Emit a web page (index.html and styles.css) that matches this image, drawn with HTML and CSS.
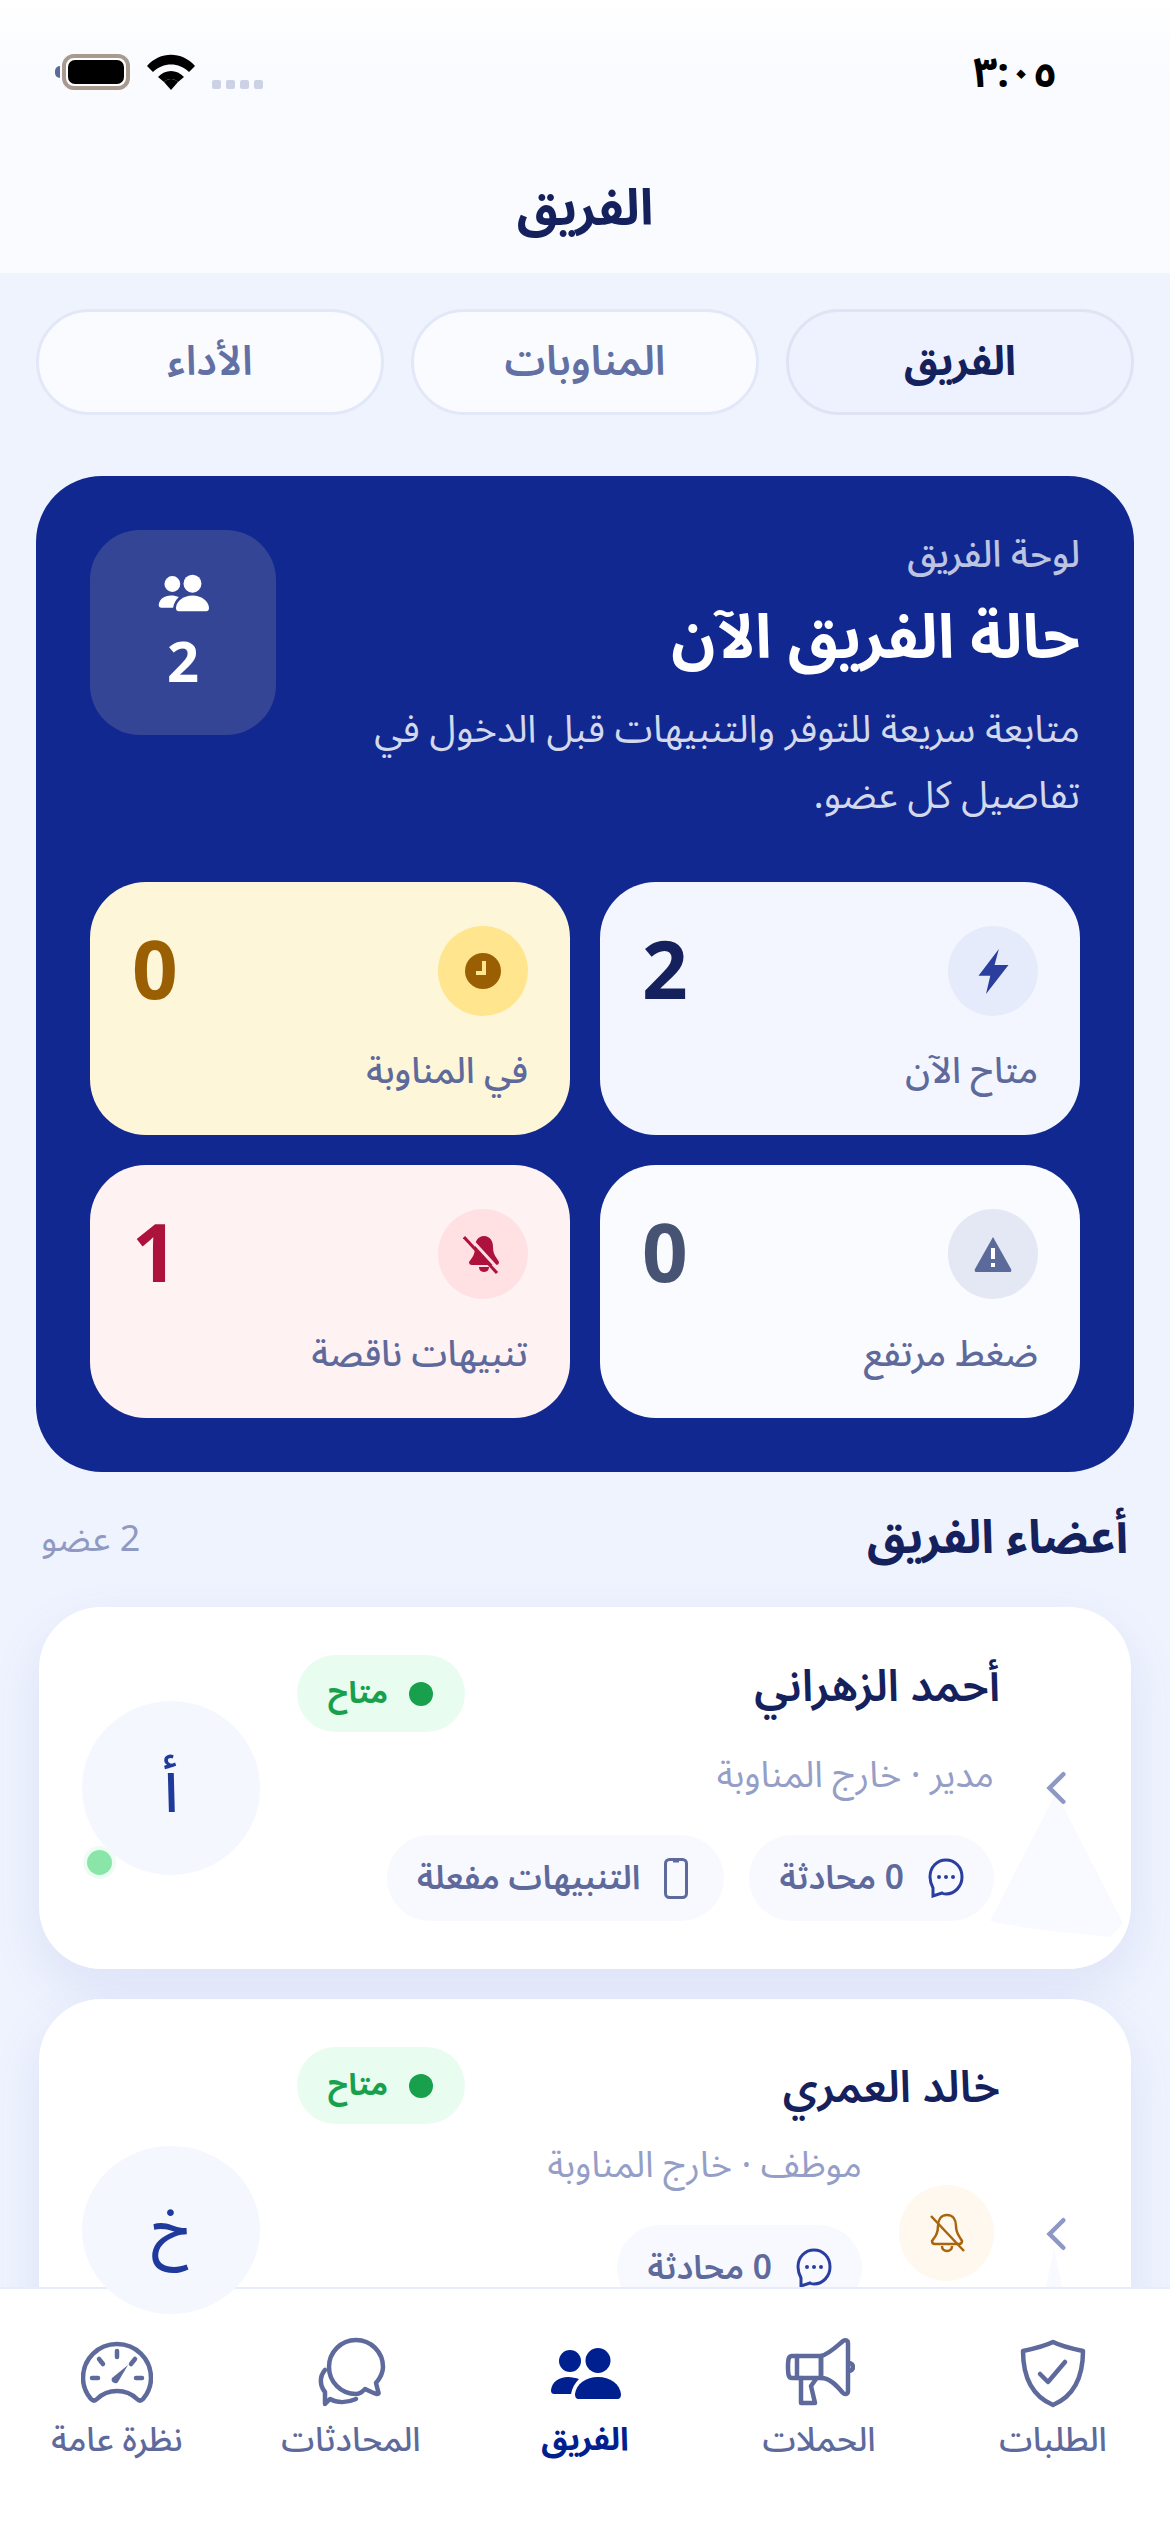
FILE: index.html
```html
<!DOCTYPE html>
<html lang="ar" dir="rtl">
<head>
  <meta charset="UTF-8">
  <meta name="viewport" content="width=device-width, initial-scale=1.0">
  <title>الفريق</title>
  <link rel="stylesheet" href="styles.css">
</head>
<body>
  <svg class="defs" width="0" height="0" aria-hidden="true">
    <symbol id="people" viewBox="0 0 71 51">
      <circle cx="20" cy="13" r="11"/>
      <circle cx="48" cy="12.5" r="12.5"/>
      <path d="M1 42C2 34 9 29 18 29C22 29 26 30 29 31C25 35 22 40 21 46H5C2 46 1 45 1 42Z"/>
      <path d="M25 46C26 36 36 29 48 29C60 29 70 36 71 46C71 49 70 51 67 51H29C26 51 25 49 25 46Z"/>
    </symbol>
  </svg>

  <!-- الراس -->
  <header class="top">
    <div class="status">
      <span class="time">٣:٠٥</span>
      <div class="status-icons">
        <span class="nub"></span>
        <span class="battery"><span class="battery-fill"></span></span>
        <svg class="wifi" viewBox="0 0 48 36"><path d="M0 12C13 -3 35 -3 48 12L42 18C32 8 16 8 6 18Z"/><path d="M11 23C18 15 30 15 37 23L31 28C27 24 21 24 17 28Z"/><path d="M17 28C21 24 27 24 31 28L24 36Z"/></svg>
        <span class="signal"><i></i><i></i><i></i><i></i></span>
      </div>
    </div>
    <h1>الفريق</h1>
  </header>

  <nav class="tabs">
    <a class="tab active">الفريق</a>
    <a class="tab">المناوبات</a>
    <a class="tab">الأداء</a>
  </nav>

  <!-- لوحة الحالة -->
  <section class="hero">
    <div class="hero-head">
      <div class="hero-copy">
        <div class="hero-label">لوحة الفريق</div>
        <h2>حالة الفريق الآن</h2>
        <p>متابعة سريعة للتوفر والتنبيهات قبل الدخول في تفاصيل كل عضو.</p>
      </div>
      <div class="hero-count">
        <svg class="hero-people"><use href="#people"/></svg>
        <strong>2</strong>
      </div>
    </div>
    <div class="stats">
      <div class="stat stat-blue">
        <div class="stat-top">
          <span class="stat-icon"><svg class="bolt" viewBox="2 0 28 42"><path d="M21 0L2 25H13L9 42L30 15H17Z"/></svg></span>
          <span class="stat-num">2</span>
        </div>
        <div class="stat-label">متاح الآن</div>
      </div>
      <div class="stat stat-amber">
        <div class="stat-top">
          <span class="stat-icon"><svg viewBox="0 0 40 40"><circle cx="20" cy="20" r="18"/><path class="hand" d="M21 10V22H13"/></svg></span>
          <span class="stat-num">0</span>
        </div>
        <div class="stat-label">في المناوبة</div>
      </div>
      <div class="stat stat-slate">
        <div class="stat-top">
          <span class="stat-icon"><svg viewBox="0 0 40 36"><path d="M20 1L38 33C39 35 38 36 36 36H4C2 36 1 35 2 33Z"/><path class="hand" d="M20 12V23M20 27V31"/></svg></span>
          <span class="stat-num">0</span>
        </div>
        <div class="stat-label">ضغط مرتفع</div>
      </div>
      <div class="stat stat-red">
        <div class="stat-top">
          <span class="stat-icon"><svg viewBox="0 0 40 40"><path d="M21 2C27 2 30 7 30 13C30 21 34 24 36 28C36 30 35 31 33 31H9C7 31 6 30 6 28C9 24 12 21 12 13C12 7 15 2 21 2Z"/><path d="M16 33H26C26 36 24 38 21 38C18 38 16 36 16 33Z"/><path class="gap" d="M5 2L38 38"/><path class="slash" d="M1 3L34 39"/></svg></span>
          <span class="stat-num">1</span>
        </div>
        <div class="stat-label">تنبيهات ناقصة</div>
      </div>
    </div>
  </section>

  <div class="section-head">
    <h3>أعضاء الفريق</h3>
    <span>2 عضو</span>
  </div>

  <!-- الاعضاء -->
  <article class="member">
    <svg class="chevron" viewBox="0 0 24 36"><path d="M20 3L5 18L20 33"/></svg>
    <div class="member-main">
      <div class="member-head">
        <div class="name">أحمد الزهراني</div>
        <span class="pill"><i></i>متاح</span>
      </div>
      <div class="sub">مدير · خارج المناوبة</div>
      <div class="chips">
        <span class="chip">
          <svg class="chat" viewBox="0 0 36 40"><path d="M18 2C9 2 2 9 2 19C2 24 4 28 5 30V38L14 35C15 36 17 36 18 36C27 36 34 28 34 19C34 9 27 2 18 2Z"/><circle class="dot" cx="11" cy="19" r="2"/><circle class="dot" cx="18" cy="19" r="2"/><circle class="dot" cx="25" cy="19" r="2"/></svg>
          0 محادثة
        </span>
        <span class="chip">
          <svg class="phone" viewBox="0 0 24 41"><rect x="1.5" y="1.5" width="21" height="38" rx="4"/><path d="M9 3H15"/></svg>
          التنبيهات مفعلة
        </span>
      </div>
    </div>
    <div class="avatar">أ<span class="online"></span></div>
    <svg class="mark" viewBox="0 0 133 144"><path d="M66 0L133 130L120 144C80 140 30 135 0 128Z"/></svg>
  </article>

  <article class="member member-tall">
    <svg class="chevron" viewBox="0 0 24 36"><path d="M20 3L5 18L20 33"/></svg>
    <div class="member-main">
      <div class="member-head">
        <div class="name">خالد العمري</div>
        <span class="pill"><i></i>متاح</span>
      </div>
      <div class="member-lower">
        <span class="mute"><svg viewBox="0 0 40 40"><path d="M20 2C26 2 29 7 29 13C29 21 33 24 35 28C35 30 34 31 32 31H8C6 31 5 30 5 28C8 24 11 21 11 13C11 7 14 2 20 2Z"/><path d="M15 33C15 36 17 38 20 38C23 38 25 36 25 33"/><path d="M4 3L37 38"/></svg></span>
        <div>
          <div class="sub">موظف · خارج المناوبة</div>
          <div class="chips">
            <span class="chip">
              <svg class="chat" viewBox="0 0 36 40"><path d="M18 2C9 2 2 9 2 19C2 24 4 28 5 30V38L14 35C15 36 17 36 18 36C27 36 34 28 34 19C34 9 27 2 18 2Z"/><circle class="dot" cx="11" cy="19" r="2"/><circle class="dot" cx="18" cy="19" r="2"/><circle class="dot" cx="25" cy="19" r="2"/></svg>
              0 محادثة
            </span>
          </div>
        </div>
      </div>
    </div>
    <div class="avatar avatar-over">خ</div>
    <svg class="mark" viewBox="0 0 42 100" preserveAspectRatio="none"><path d="M21 0L42 100H0Z"/></svg>
  </article>

  <!-- الشريط السفلي -->
  <footer class="bottom-nav">
    <a class="nav-item">
      <svg class="nav-icon" viewBox="0 0 72 72"><path d="M36 6C40 8 52 12 66 15C66 42 57 60 36 69C15 60 6 42 6 15C20 12 32 8 36 6Z"/><path d="M23 38L31 46L48 26"/></svg>
      <span>الطلبات</span>
    </a>
    <a class="nav-item">
      <svg class="nav-icon" viewBox="0 0 72 72"><path d="M38 20C46 18 54 10 60 5C63 3 65 5 65 7V55C65 58 62 59 60 57C54 50 47 42 38 42Z"/><path d="M38 20H9C6 20 5 22 5 31C5 40 6 42 9 42H38Z"/><path d="M14 20V42"/><path d="M18 42V67H32L28 50L33 43"/><path d="M66 27A4 4 0 0 1 66 35"/></svg>
      <span>الحملات</span>
    </a>
    <a class="nav-item active">
      <svg class="nav-people"><use href="#people"/></svg>
      <span>الفريق</span>
    </a>
    <a class="nav-item">
      <svg class="nav-icon" viewBox="0 0 72 72"><path d="M41 4A27 27 0 1 0 41 58C45 58 47 56 50 53C54 55 58 57 62 58C64 58 64 57 63 55L61 47C66 41 68 36 68 31A27 27 0 0 0 41 4Z"/><path d="M10 34C4 41 5 50 10 56V68L15 63C22 67 32 67 41 63"/></svg>
      <span>المحادثات</span>
    </a>
    <a class="nav-item">
      <svg class="nav-icon" viewBox="0 0 72 72"><path d="M10 63C4 56 2 48 2 42C2 23 17 8 36 8C55 8 70 23 70 42C70 48 68 56 62 63C60 65 58 65 56 63C51 58 44 55 36 55C28 55 21 58 16 63C14 65 12 65 10 63Z"/><path d="M36 15V21M18 23L22 28M54 23L50 28M11 42H17M55 42H61"/><path class="needle" d="M47 29L37 46C35 49 29 46 31 42Z"/></svg>
      <span>نظرة عامة</span>
    </a>
  </footer>
</body>
</html>
```

FILE: styles.css
```css
* {
  box-sizing: border-box;
}

html, body {
  margin: 0;
  height: 2532px;
  overflow: hidden;
}

body {
  position: relative;
  background-color: #eff3fe;
  color: #14215c;
  font-family: "Noto Sans", "Noto Sans Arabic", "DejaVu Sans", sans-serif;
}

.defs {
  position: absolute;
}

/* Header */
.top {
  height: 273px;
  background: linear-gradient(#fff, #fafbff 70px);
  padding-top: 52px;
}

.status {
  display: flex;
  justify-content: space-between;
  height: 40px;
  padding: 0 113px 0 55px;
}

.time {
  font-size: 42px;
  font-weight: 700;
  line-height: 38px;
  color: #000;
}

.status-icons {
  direction: ltr;
  display: flex;
  align-items: center;
  height: 40px;
}

.nub {
  width: 5px;
  height: 12px;
  border-radius: 5px 0 0 5px;
  background-color: #5b6a9c;
}

.battery {
  width: 68px;
  height: 36px;
  border: 4px solid #a89a8e;
  border-radius: 12px;
  background-color: #fff;
  padding: 2px;
  margin-left: 2px;
}

.battery-fill {
  display: block;
  height: 100%;
  background-color: #000;
  border-radius: 7px;
}

.wifi {
  width: 48px;
  height: 36px;
  margin-left: 17px;
}

.signal {
  display: flex;
  gap: 5px;
  margin-left: 17px;
  align-self: flex-end;
  margin-bottom: 3px;
}

.signal i {
  width: 9px;
  height: 9px;
  border-radius: 2px;
  background-color: #cdd1e5;
}

h1 {
  margin: 82px 0 0;
  text-align: center;
  font-size: 50px;
  font-weight: 700;
  line-height: 64px;
}

/* Tabs */
.tabs {
  display: grid;
  grid-template-columns: repeat(3, 1fr);
  gap: 27px;
  padding: 36px 36px 0;
}

.tab {
  height: 106px;
  display: flex;
  align-items: center;
  justify-content: center;
  border: 3px solid #e3e8f8;
  border-radius: 53px;
  background-color: #fafbff;
  color: #6270a3;
  font-size: 41px;
  font-weight: 600;
}

.tab.active {
  background-color: #eef2fe;
  border-color: #dfe4f4;
  color: #14215c;
  font-weight: 700;
}

/* Hero */
.hero {
  margin: 61px 36px 0;
  padding: 54px;
  height: 996px;
  background-color: #122891;
  border-radius: 66px;
}

.hero-head {
  display: flex;
  justify-content: space-between;
  height: 352px;
}

.hero-label {
  font-size: 37px;
  font-weight: 500;
  line-height: 46px;
  color: #bcc4e0;
}

.hero h2 {
  margin: 21px 0 0;
  font-size: 61px;
  font-weight: 700;
  line-height: 76px;
  color: #fff;
}

.hero p {
  margin: 21px 0 0;
  width: 730px;
  font-size: 38.4px;
  line-height: 66px;
  color: #d3d8ea;
}

.hero-count {
  width: 186px;
  height: 205px;
  border-radius: 50px;
  background-color: #344596;
  display: flex;
  flex-direction: column;
  align-items: center;
  padding-top: 44px;
  color: #fff;
}

.hero-people {
  width: 51px;
  height: 38px;
  fill: #fff;
}

.hero-count strong {
  font-size: 56px;
  line-height: 76px;
  margin-top: 10px;
}

.stats {
  display: grid;
  grid-template-columns: 1fr 1fr;
  gap: 30px;
}

.stat {
  height: 253px;
  border-radius: 56px;
  padding: 44px 42px 0;
}

.stat-top {
  display: flex;
  justify-content: space-between;
  align-items: center;
}

.stat-icon {
  width: 90px;
  height: 90px;
  border-radius: 50%;
  display: flex;
  align-items: center;
  justify-content: center;
}

.stat-icon svg {
  width: 40px;
  height: 40px;
}

.stat-icon .bolt {
  width: 31px;
  height: 45px;
}

.stat-num {
  font-size: 80px;
  font-weight: 700;
  line-height: 84px;
  margin-bottom: 6px;
}

.stat-label {
  margin-top: 30px;
  font-size: 36px;
  font-weight: 500;
  line-height: 48px;
  color: #5e6a9b;
}

.stat-blue { background-color: #f3f6ff; }
.stat-blue .stat-icon { background-color: #e6ebfb; }
.stat-blue svg { fill: #2a3f9d; }
.stat-blue .stat-num { color: #14215c; }

.stat-amber { background-color: #fef6d8; }
.stat-amber .stat-icon { background-color: #fee58e; }
.stat-amber svg { fill: #9a5f02; }
.stat-amber .stat-num { color: #9a5f02; }
.stat-amber .hand { fill: none; stroke: #fee58e; stroke-width: 4; }

.stat-slate { background-color: #fafbff; }
.stat-slate .stat-icon { background-color: #e3e8f4; }
.stat-slate svg { fill: #5b6a9a; }
.stat-slate .stat-num { color: #475373; }
.stat-slate .hand { fill: none; stroke: #fff; stroke-width: 4; }

.stat-red { background-color: #fff2f3; }
.stat-red .stat-icon { background-color: #ffe1e4; }
.stat-red svg { fill: #ad123c; }
.stat-red .stat-num { color: #ad123c; }
.stat-red .slash { fill: none; stroke: #ad123c; stroke-width: 3; }
.stat-red .gap { fill: none; stroke: #ffe1e4; stroke-width: 3; }

/* Members */
.section-head {
  display: flex;
  justify-content: space-between;
  align-items: center;
  margin-top: 26px;
  padding: 0 42px 0 41px;
  height: 80px;
}

h3 {
  margin: 0;
  font-size: 46.5px;
  font-weight: 700;
}

.section-head span {
  margin-top: 3px;
  font-size: 36px;
  color: #8f99c1;
}

.member {
  position: relative;
  display: flex;
  align-items: center;
  margin: 29px 39px 30px;
  padding: 48px 64px 48px 43px;
  background-color: #fff;
  border-radius: 62px;
  box-shadow: 0 20px 50px rgba(90, 110, 200, 0.12);
}

.member-tall {
  height: 470px;
}

.member-tall .member-main {
  align-self: flex-start;
}

.chevron {
  width: 22px;
  height: 36px;
  fill: none;
  stroke: #8e98c4;
  stroke-width: 5;
  stroke-linecap: round;
  margin-left: 45px;
  flex: none;
  position: relative;
  z-index: 1;
}

.member-main {
  flex: 1;
  position: relative;
  z-index: 1;
}

.member-head {
  display: flex;
  justify-content: space-between;
  align-items: flex-start;
}

.name {
  margin-top: -3px;
  font-size: 44px;
  font-weight: 600;
  line-height: 64px;
}

.member-tall .name {
  margin-top: 6px;
}

.pill {
  display: flex;
  align-items: center;
  gap: 21px;
  height: 77px;
  padding: 0 32px 0 31px;
  border-radius: 39px;
  background-color: #e8fdf0;
  color: #18a04d;
  font-size: 30px;
  font-weight: 700;
}

.pill i {
  width: 24px;
  height: 24px;
  border-radius: 50%;
  background-color: #18a04d;
}

.sub {
  margin-top: 17px;
  padding-right: 6px;
  font-size: 36.5px;
  line-height: 48px;
  color: #959ec7;
}

.chips {
  display: flex;
  gap: 25px;
  margin: 38px 6px 0 0;
}

.chip {
  display: flex;
  align-items: center;
  gap: 24px;
  height: 86px;
  padding: 0 30px;
  border-radius: 43px;
  background-color: #f8f9ff;
  color: #5e6a9b;
  font-size: 33.5px;
  font-weight: 600;
}

.chat, .phone {
  fill: none;
  stroke-width: 3;
  flex: none;
}

.chat {
  width: 36px;
  height: 40px;
  stroke: #2a3f9d;
}

.chat .dot {
  fill: #2a3f9d;
  stroke: none;
}

.phone {
  width: 24px;
  height: 41px;
  margin-right: 6px;
  stroke: #5e6a9b;
}

.member-lower {
  display: flex;
  gap: 37px;
  margin-top: -2px;
  padding-right: 6px;
}

.member-lower .sub {
  padding-right: 0;
}

.member-lower .chips {
  margin-right: 0;
}

.mute {
  width: 95px;
  height: 96px;
  margin-top: 63px;
  border-radius: 50%;
  background-color: #fff8ee;
  display: flex;
  align-items: center;
  justify-content: center;
  flex: none;
}

.mute svg {
  width: 40px;
  height: 40px;
  fill: none;
  stroke: #a9650b;
  stroke-width: 2.5;
}

.avatar {
  position: relative;
  flex: none;
  width: 178px;
  height: 174px;
  margin-right: 37px;
  padding-top: 10px;
  border-radius: 50%;
  background-color: #f5f7ff;
  color: #1f3a9a;
  display: flex;
  align-items: center;
  justify-content: center;
  font-size: 60px;
  font-weight: 500;
}

.avatar-over {
  height: 168px;
  margin-bottom: 8px;
  padding-top: 0;
  z-index: 5;
}

.online {
  position: absolute;
  left: 5px;
  bottom: 0;
  width: 25px;
  height: 25px;
  border-radius: 50%;
  background-color: #8ae6a8;
  box-shadow: 0 0 0 4px #eefcf4;
}

.mark {
  position: absolute;
  right: 8px;
  top: 186px;
  width: 133px;
  height: 144px;
  fill: #f9faff;
}

.member-tall .mark {
  width: 42px;
  height: 100px;
  top: 249px;
  right: 56px;
}

/* Bottom nav */
.bottom-nav {
  position: absolute;
  left: 0;
  right: 0;
  bottom: 0;
  height: 245px;
  z-index: 3;
  display: grid;
  grid-template-columns: repeat(5, 1fr);
  padding-top: 47px;
  background-color: #fff;
  border-top: 2px solid #e8ecf8;
}

.nav-item {
  display: flex;
  flex-direction: column;
  align-items: center;
  color: #5e6a9b;
  font-size: 33.5px;
  font-weight: 500;
}

.nav-item span {
  margin-top: 5px;
  line-height: 50px;
}

.nav-icon {
  width: 72px;
  height: 72px;
  fill: none;
  stroke: #5e6a9b;
  stroke-width: 4.5;
  stroke-linecap: round;
  stroke-linejoin: round;
}

.nav-icon .needle {
  fill: #5e6a9b;
  stroke: none;
}

.nav-people {
  width: 71px;
  height: 51px;
  margin: 12px 0 9px;
  fill: #00208f;
}

.nav-item.active {
  color: #00208f;
  font-size: 32px;
  font-weight: 700;
}
```
